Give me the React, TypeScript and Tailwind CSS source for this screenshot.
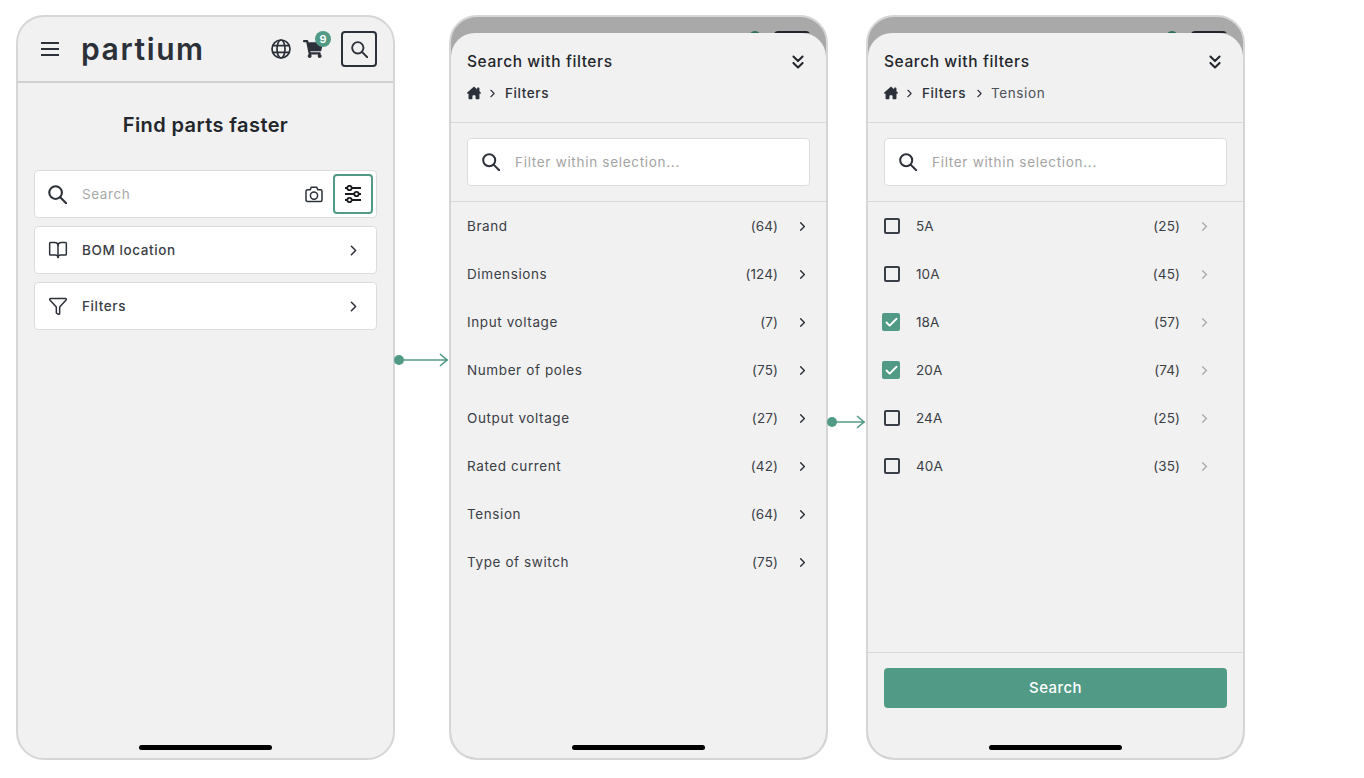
import { BookOpen, ChevronRight, ChevronsDown, Check, Funnel } from "lucide-react";
import { FaShoppingCart } from "react-icons/fa";
import { FaHouseChimney } from "react-icons/fa6";

const filters = [
  { name: "Brand", count: 64 },
  { name: "Dimensions", count: 124 },
  { name: "Input voltage", count: 7 },
  { name: "Number of poles", count: 75 },
  { name: "Output voltage", count: 27 },
  { name: "Rated current", count: 42 },
  { name: "Tension", count: 64 },
  { name: "Type of switch", count: 75 },
];

const values = [
  { name: "5A", count: 25, checked: false },
  { name: "10A", count: 45, checked: false },
  { name: "18A", count: 57, checked: true },
  { name: "20A", count: 74, checked: true },
  { name: "24A", count: 25, checked: false },
  { name: "40A", count: 35, checked: false },
];

function SearchIcon({ size }: { size: number }) {
  return (
    <svg width={size} height={size} viewBox="0 0 18 18" fill="none" stroke="#2c3038" strokeWidth="2" className="shrink-0">
      <circle cx="7.2" cy="7.2" r="6" />
      <path d="M11.6 11.6L17.2 17.2" strokeLinecap="round" />
    </svg>
  );
}

function GlobeIcon() {
  return (
    <svg width="20" height="20" viewBox="0 0 20 20" fill="none" stroke="#2c3038" strokeWidth="1.7">
      <circle cx="10" cy="10" r="9" />
      <ellipse cx="10" cy="10" rx="4" ry="9" />
      <path d="M1.8 6.7H18.2M1.8 13.3H18.2" />
    </svg>
  );
}

function SlidersIcon() {
  return (
    <svg width="18" height="18" viewBox="0 0 18 18" fill="none" stroke="#1a1c20" strokeWidth="1.8">
      <path d="M1 3H17M1 9H17M1 15H17" />
      <circle cx="5.5" cy="3" r="2.2" fill="white" />
      <circle cx="12.5" cy="9" r="2.2" fill="white" />
      <circle cx="5.5" cy="15" r="2.2" fill="white" />
    </svg>
  );
}

function CameraIcon() {
  return (
    <svg width="18" height="17" viewBox="0 0 18 17" fill="none" stroke="#2c3038" strokeWidth="1.5" className="ml-auto">
      <path d="M2.5 3.8H5.2L6.3 1.2H11.7L12.8 3.8H15.5C16.4 3.8 17 4.4 17 5.3V14C17 14.9 16.4 15.5 15.5 15.5H2.5C1.6 15.5 1 14.9 1 14V5.3C1 4.4 1.6 3.8 2.5 3.8Z" />
      <circle cx="9" cy="9.6" r="3.6" />
    </svg>
  );
}

function HomeBar() {
  return (
    <div className="flex h-[13px] shrink-0 justify-center">
      <div className="h-[5px] w-[133px] rounded-full bg-black" />
    </div>
  );
}

function Connector({ width, top }: { width: number; top: string }) {
  return (
    <div className={`relative z-10 shrink-0 ${top}`} style={{ width }}>
      <svg width={width + 2} height="14" viewBox={`0 0 ${width + 2} 14`} className="-ml-[1px] block overflow-visible">
        <circle cx="5" cy="7" r="5" fill="#519a85" />
        <path d={`M5 7H${width}M${width - 8} 1l7 6-7 6`} fill="none" stroke="#519a85" strokeWidth="1.6" />
      </svg>
    </div>
  );
}

function Sheet({ tension, children }: { tension?: boolean; children: React.ReactNode }) {
  return (
    <div className="flex h-[745px] w-[379px] shrink-0 flex-col overflow-hidden rounded-[28px] border-2 border-[#d6d6d6] bg-[#a9a9a9]">
      <div className="flex h-4 shrink-0 justify-end gap-[13px] overflow-hidden pr-[16px] pt-[14px]">
        <div className="h-3 w-3 rounded-full bg-[#2f6f5e]" />
        <div className="h-9 w-9 rounded bg-[#22262c]" />
      </div>
      <div className="flex flex-1 flex-col rounded-t-[24px] bg-[#f1f1f1]">
        <div className="flex items-center justify-between pl-4 pr-[17px] pt-[18px]">
          <span className="text-[15.5px] font-medium leading-[22px] text-[#23262b]">Search with filters</span>
          <ChevronsDown size={22} strokeWidth={2.2} className="text-[#23262b]" />
        </div>
        <div className="mt-[10px] flex h-[20px] items-center pl-4 text-[13.5px] text-[#2c3038]">
          <FaHouseChimney size={14} />
          <ChevronRight size={13} strokeWidth={2} className="ml-[5px] mr-[6px]" />
          <span className="font-[450]">Filters</span>
          {tension && (
            <>
              <ChevronRight size={13} strokeWidth={2} className="ml-[7px] mr-[5px]" />
              <span className="text-[#4c5058]">Tension</span>
            </>
          )}
        </div>
        <div className="mt-[19px] border-t border-[#d8d8d8] px-4 py-[15px]">
          <div className="flex h-[48px] items-center gap-[15px] rounded border border-[#dcdcdc] bg-white pl-[14px]">
            <SearchIcon size={18} />
            <span className="text-[13.5px] tracking-[0.7px] text-[#a4a4a4]">Filter within selection...</span>
          </div>
        </div>
        {children}
      </div>
    </div>
  );
}

export default function App() {
  return (
    <div className="flex min-h-[778px] items-start bg-white pl-4 pt-[15px] font-['Inter',sans-serif] tracking-[0.6px]">
      <div className="flex h-[745px] w-[379px] shrink-0 flex-col overflow-hidden rounded-[28px] border-2 border-[#d6d6d6] bg-[#f1f1f1]">
        <div className="flex h-[66px] shrink-0 items-center border-b-2 border-[#d0d0d0] pl-[23px] pr-4">
          <svg width="18" height="14" viewBox="0 0 18 14" fill="none" stroke="#2c3038" strokeWidth="2">
            <path d="M0 1H18M0 7H18M0 13H18" />
          </svg>
          <span className="ml-[22px] text-[30px] font-semibold leading-none tracking-[1.6px] text-[#2c3038]">partium</span>
          <div className="ml-auto">
            <GlobeIcon />
          </div>
          <div className="relative ml-[12px]">
            <FaShoppingCart size={20} className="text-[#2c3038]" />
            <span className="absolute -right-[8px] -top-[8px] flex h-4 w-4 items-center justify-center rounded-full bg-[#519a85] text-[11px] font-semibold tracking-normal text-white">9</span>
          </div>
          <div className="ml-[18px] flex h-9 w-9 items-center justify-center rounded border-2 border-[#2c3038]">
            <SearchIcon size={17} />
          </div>
        </div>
        <h1 className="mt-[30px] text-center text-[20px] font-semibold leading-[24px] tracking-[0.4px] text-[#23262b]">Find parts faster</h1>
        <div className="mt-[33px] flex flex-col gap-2 px-4">
          <div className="flex h-[48px] items-center rounded border border-[#dcdcdc] bg-white pl-[13px] pr-[3px]">
            <SearchIcon size={19} />
            <span className="ml-[15px] text-[13.5px] text-[#a9a9a9]">Search</span>
            <CameraIcon />
            <div className="ml-[10px] flex h-[40px] w-[40px] items-center justify-center rounded border-2 border-[#519a85]">
              <SlidersIcon />
            </div>
          </div>
          <div className="flex h-[48px] items-center rounded border border-[#dcdcdc] bg-white pl-[13px] pr-[14px]">
            <BookOpen size={20} strokeWidth={1.8} className="text-[#2c3038]" />
            <span className="ml-[14px] text-[13.5px] font-[450] text-[#3a3e46]">BOM location</span>
            <ChevronRight size={17} strokeWidth={2.2} className="ml-auto text-[#2c3038]" />
          </div>
          <div className="flex h-[48px] items-center rounded border border-[#dcdcdc] bg-white pl-[13px] pr-[14px]">
            <Funnel size={20} strokeWidth={1.8} className="text-[#2c3038]" />
            <span className="ml-[14px] text-[13.5px] font-[450] text-[#3a3e46]">Filters</span>
            <ChevronRight size={17} strokeWidth={2.2} className="ml-auto text-[#2c3038]" />
          </div>
        </div>
        <div className="mt-auto">
          <HomeBar />
        </div>
      </div>

      <Connector width={54} top="mt-[338px]" />

      <Sheet>
        <div className="border-t border-[#d8d8d8]">
          {filters.map((f) => (
            <div key={f.name} className="flex h-[48px] items-center px-4 text-[13.5px] text-[#3a3e46]">
              <span>{f.name}</span>
              <span className="ml-auto tracking-[0.1px]">({f.count})</span>
              <ChevronRight size={15} strokeWidth={2.2} className="ml-[17px] text-[#2c3038]" />
            </div>
          ))}
        </div>
        <div className="mt-auto">
          <HomeBar />
        </div>
      </Sheet>

      <Connector width={38} top="mt-[400px]" />

      <Sheet tension>
        <div className="border-t border-[#d8d8d8]">
          {values.map((v) => (
            <div key={v.name} className="flex h-[48px] items-center pl-[14px] pr-[31px] text-[13.5px] tracking-[0.1px] text-[#3a3e46]">
              {v.checked ? (
                <span className="mr-[2px] flex h-[18px] w-[18px] items-center justify-center rounded-[2px] bg-[#519a85]">
                  <Check size={15} strokeWidth={3} className="text-white" />
                </span>
              ) : (
                <span className="mx-[2px] h-4 w-4 rounded-[2px] border-2 border-[#3a3e46]" />
              )}
              <span className="ml-[14px]">{v.name}</span>
              <span className="ml-auto">({v.count})</span>
              <ChevronRight size={15} strokeWidth={2} className="ml-[17px] text-[#a9a9a9]" />
            </div>
          ))}
        </div>
        <div className="mt-auto border-t border-[#d8d8d8] px-4 pt-[15px]">
          <button className="h-[40px] w-full rounded bg-[#519a85] pt-px text-[15px] font-medium tracking-[0.4px] text-white">Search</button>
          <div className="h-[37px]" />
          <HomeBar />
        </div>
      </Sheet>
    </div>
  );
}
